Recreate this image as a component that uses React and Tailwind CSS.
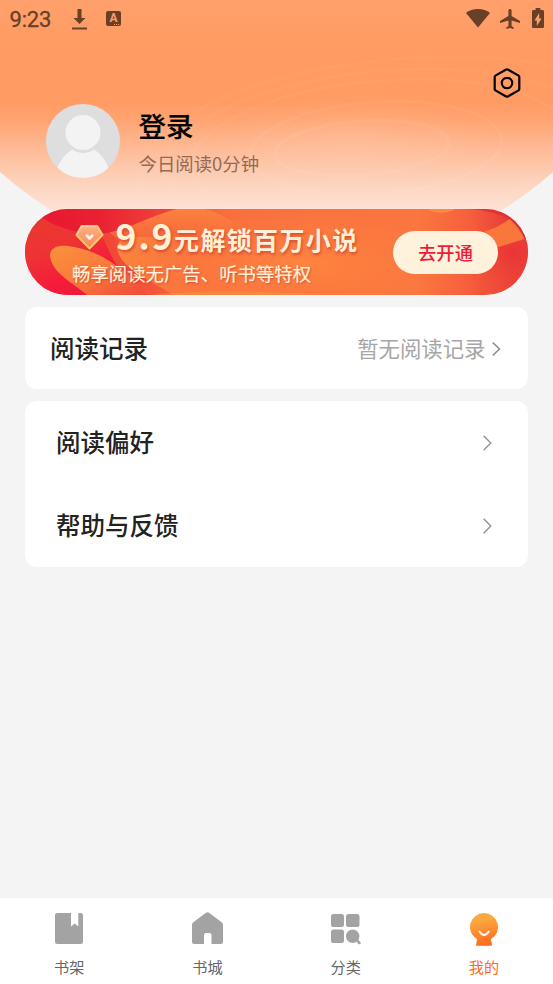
import { useState } from "react";

function StatusBar() {
  return (
    <div className="flex h-[37px] items-center justify-between pl-[9.500px] pr-[9px] text-[#693f28]">
      <div className="flex items-center">
        <span className="w-[62.500px] pt-[2px] font-['Roboto',sans-serif] text-[22px] leading-[38px] font-normal tracking-[-0.200px] [-webkit-text-stroke:0.300px_#693f28]">9:23</span>
        <svg className="mt-px h-[21px] w-[15px]" viewBox="0 0 15 21" fill="currentColor">
          <path d="M5.500 0h4v9h4L7.500 15l-6-6h4zM0 18.500h15v2H0z" />
        </svg>
        <span className="relative ml-[19px] flex h-[15px] w-[15px] items-center justify-center rounded-[2px] bg-[#693f28] pb-px font-['Roboto',sans-serif] text-[12px] font-bold text-[#ff9c65]">
          A
          <svg className="absolute right-px bottom-px h-[1px] w-[6px]" viewBox="0 0 6 1" fill="#ff9c65">
            <path d="M0 0h1v1H0zM2 0h1v1H2zM4 0h1v1H4z" />
          </svg>
        </span>
      </div>
      <div className="flex items-center">
        <svg className="mb-px h-[19px] w-[24px]" viewBox="0 0 24 19" fill="currentColor">
          <path d="M12 0C7.300 0 3.100 1.500 0 4L12 18.500 24 4C20.900 1.500 16.700 0 12 0z" />
        </svg>
        <svg className="ml-[10px] h-[20px] w-[20px]" viewBox="2 2 19 20" preserveAspectRatio="none" fill="currentColor">
          <path d="M21 16v-2l-8-5V3.500c0-.83-.67-1.500-1.500-1.500S10 2.670 10 3.500V9l-8 5v2l8-2.500V19l-2 1.500V22l3.500-1 3.500 1v-1.500L13 19v-5.500l8 2.500z" />
        </svg>
        <svg className="mb-px ml-[12px] h-[20px] w-[12px]" viewBox="7 2 10 20" preserveAspectRatio="none" fill="currentColor">
          <path d="M15.670 4H14V2h-4v2H8.330C7.600 4 7 4.600 7 5.330v15.330C7 21.400 7.600 22 8.330 22h7.330c.74 0 1.340-.6 1.340-1.330V5.330C17 4.600 16.400 4 15.670 4zM11 20v-5.500H9L13 7v5.500h2L11 20z" />
        </svg>
      </div>
    </div>
  );
}

function HeaderArt() {
  return (
    <svg className="absolute inset-x-0 top-0 h-[277px] w-full" viewBox="0 0 553 277">
      <defs>
        <linearGradient id="sky" gradientUnits="userSpaceOnUse" x1="0" y1="0" x2="0" y2="215">
          <stop offset="0" stopColor="#ffa06c" />
          <stop offset="0.2" stopColor="#ff9b63" />
          <stop offset="0.48" stopColor="#ff9c64" />
          <stop offset="0.56" stopColor="#ffa472" />
          <stop offset="0.7" stopColor="#febc98" />
          <stop offset="0.85" stopColor="#fdd3bd" />
          <stop offset="1" stopColor="#fde5da" />
        </linearGradient>
        <clipPath id="dome">
          <path d="M0 0H553V172A419 419 0 0 1 0 172z" />
        </clipPath>
        <radialGradient id="glow">
          <stop offset="0" stopColor="#fff" stopOpacity="0.1" />
          <stop offset="1" stopColor="#fff" stopOpacity="0" />
        </radialGradient>
      </defs>
      <g clipPath="url(#dome)">
        <rect width="553" height="277" fill="url(#sky)" />
        <ellipse cx="350" cy="135" rx="140" ry="40" fill="url(#glow)" />
        <g fill="none" stroke="#fff" strokeWidth="3">
          <ellipse cx="362" cy="148" rx="87" ry="27" strokeOpacity="0.06" transform="rotate(-4 362 148)" />
          <ellipse cx="376" cy="148" rx="126" ry="46" strokeOpacity="0.05" transform="rotate(-4 376 148)" />
          <ellipse cx="380" cy="151" rx="190" ry="70" strokeOpacity="0.04" transform="rotate(-5 380 151)" />
          <ellipse cx="385" cy="153" rx="220" ry="82" strokeOpacity="0.03" transform="rotate(-5 385 153)" />
          <ellipse cx="400" cy="155" rx="260" ry="96" strokeOpacity="0.03" transform="rotate(-5 400 155)" />
        </g>
      </g>
    </svg>
  );
}

function Avatar() {
  return (
    <svg className="h-[74px] w-[74px] shrink-0" viewBox="0 0 74 74">
      <defs>
        <clipPath id="face">
          <circle cx="37" cy="37" r="37" />
        </clipPath>
      </defs>
      <g clipPath="url(#face)">
        <rect width="74" height="74" fill="#dedede" />
        <path d="M9 74C11 60 18 50 26.500 45.500C32 50 42 50 48 45.500C56 50 63 60 65 74z" fill="#f3f3f3" />
        <circle cx="37" cy="29" r="19.500" fill="#dedede" />
        <circle cx="37" cy="28.500" r="17.500" fill="#f3f3f3" />
      </g>
    </svg>
  );
}

function BannerArt() {
  return (
    <svg className="absolute inset-0 h-full w-full" viewBox="0 0 504 86" preserveAspectRatio="none">
      <defs>
        <linearGradient id="base">
          <stop offset="0" stopColor="#ef3034" />
          <stop offset="0.12" stopColor="#ee3f36" />
          <stop offset="0.25" stopColor="#f5553a" />
          <stop offset="0.42" stopColor="#f9703e" />
          <stop offset="0.78" stopColor="#fb763f" />
          <stop offset="0.88" stopColor="#f7603d" />
          <stop offset="1" stopColor="#de2c33" />
        </linearGradient>
        <linearGradient id="patch">
          <stop offset="0" stopColor="#e8162f" />
          <stop offset="0.45" stopColor="#e92133" />
          <stop offset="1" stopColor="#f2483a" />
        </linearGradient>
        <linearGradient id="ember" x1="0" y1="0" x2="0.5" y2="1">
          <stop offset="0" stopColor="#e8382e" />
          <stop offset="0.45" stopColor="#ee3434" />
          <stop offset="0.8" stopColor="#f51c3a" />
          <stop offset="1" stopColor="#f0183a" />
        </linearGradient>
        <linearGradient id="leaf" x1="0" y1="0" x2="1" y2="1">
          <stop offset="0" stopColor="#fb923c" />
          <stop offset="0.5" stopColor="#f9793c" />
          <stop offset="1" stopColor="#f04a36" />
        </linearGradient>
        <linearGradient id="hill" x1="0" y1="0" x2="0" y2="1">
          <stop offset="0" stopColor="#fa823e" />
          <stop offset="0.5" stopColor="#f96c3c" stopOpacity="0.8" />
          <stop offset="1" stopColor="#f65c3b" stopOpacity="0" />
        </linearGradient>
        <linearGradient id="dune">
          <stop offset="0" stopColor="#fb853d" />
          <stop offset="0.4" stopColor="#fb7b3e" stopOpacity="0.8" />
          <stop offset="1" stopColor="#fb773f" stopOpacity="0" />
        </linearGradient>
        <radialGradient id="warm">
          <stop offset="0" stopColor="#ff8c40" stopOpacity="0.7" />
          <stop offset="1" stopColor="#ff833f" stopOpacity="0" />
        </radialGradient>
        <radialGradient id="edge" cx="0.85" cy="0.5" r="0.75">
          <stop offset="0" stopColor="#e93437" />
          <stop offset="1" stopColor="#f9663d" stopOpacity="0" />
        </radialGradient>
      </defs>
      <rect width="504" height="86" fill="url(#base)" />
      <path d="M0 0H18V9C34 21 50 25 76 25C84 40 90 60 114 86H0z" fill="url(#ember)" />
      <path d="M10 0H152C126 7 108 18 85 23.500C56 27 34 20 18 9z" fill="url(#patch)" />
      <path d="M85 23.500C108 18 126 7 152 0H180C199 5 210 13 219 25V60H120C100 45 95 30 85 23.500z" fill="url(#hill)" />
      <path d="M25 47C25 37 36 35 49 38C77 43 100 60 122 86H62C47 73 27 64 25 47z" fill="url(#leaf)" />
      <path d="M92 38C93 31 99 29 109 28H260V86H148C128 72 94 60 92 38z" fill="url(#dune)" />
      <ellipse cx="280" cy="55" rx="150" ry="55" fill="url(#warm)" />
      <path d="M126 86C164 81.500 232 81 300 86z" fill="#fd913f" opacity="0.6" />
      <path d="M403 0C409 5 423 5 431 0z" fill="#fb8b40" />
      <path d="M402 86C430 60 460 44 474 38L500 29L504 0V86z" fill="url(#edge)" />
      <path d="M440 0H504V30L500 30C497 23 492 16 485 10C470 3 455 0 440 0z" fill="#e22a35" opacity="0.8" />
      <path d="M455 24C470 20 478 15 485 10C492 16 497 23 500 30L474 38L462 42z" fill="#f9763c" />
    </svg>
  );
}

function VipBanner() {
  return (
    <div className="relative ml-[24.500px] flex h-[86px] w-[503.500px] overflow-hidden rounded-full">
      <BannerArt />
      <div className="relative flex-1 font-['Noto_Sans_CJK_SC',sans-serif] text-[#fff0d7]">
        <div className="-mt-[2px] flex h-[54.500px] items-baseline pl-[50px] [text-shadow:1px_2px_3px_#c6352bb0]">
          <svg className="mr-[12px] h-[25px] w-[29px]" viewBox="0 0 29 25">
            <defs>
              <linearGradient id="gem" x1="0" y1="0" x2="0" y2="1">
                <stop offset="0" stopColor="#fdb084" />
                <stop offset="1" stopColor="#fb8355" />
              </linearGradient>
            </defs>
            <path d="M6.500 1.200h16L27.500 10 14.500 23.500 1.500 10z" fill="url(#gem)" stroke="#fcc56c" strokeWidth="2" strokeLinejoin="round" />
            <path d="M1.500 10L6.500 1.200h16" fill="none" stroke="#fdcba0" strokeWidth="1.500" />
            <path d="M11.700 10.500l2.800 3 2.800-3" fill="none" stroke="#fff1df" strokeWidth="2.600" strokeLinecap="round" strokeLinejoin="round" />
          </svg>
          <span className="text-[35.500px] leading-[56px] font-bold tracking-[1.700px]">9.9</span>
          <span className="text-[25px] font-bold tracking-[1.350px] whitespace-nowrap">元解锁百万小说</span>
        </div>
        <p className="pl-[47.500px] text-[18.400px] leading-[22px] whitespace-nowrap [text-shadow:1px_1px_2px_#c6352baa] [-webkit-text-stroke:0.200px_#fff0d7]">畅享阅读无广告、听书等特权</p>
      </div>
      <button className="relative mt-[21.500px] mr-[30px] h-[43px] w-[105px] rounded-full bg-[#fff2dc] pt-px font-['Noto_Sans_CJK_SC',sans-serif] text-[18.300px] font-medium text-[#ed1c36]">
        去开通
      </button>
    </div>
  );
}

function Chevron() {
  return (
    <svg className="h-[16px] w-[9px]" viewBox="0 0 9 16" fill="none" stroke="#8f8f8f" strokeWidth="1.300">
      <path d="M.6 .8l7.200 7.200-7.200 7.200" />
    </svg>
  );
}

function MenuRow({ title }) {
  return (
    <div className="flex h-[83px] items-center justify-between pr-[36px] pl-[31px]">
      <span className="text-[24.500px] font-medium text-[#222]">{title}</span>
      <Chevron />
    </div>
  );
}

const tabs = [
  {
    name: "书架",
    icon: (
      <path fill="#a3a3a3" d="M6.500 2H20V15.500L23.700 12.500 27.300 15.500V2H29.500Q32 2 32 4.500V30.500Q32 33 29.500 33H6.500Q4 33 4 30.500V4.500Q4 2 6.500 2z" />
    ),
  },
  {
    name: "书城",
    icon: (
      <path fill="#a3a3a3" d="M17 1.700Q18.500 .8 20 1.700L33 11.500Q34 12.300 34 14V31Q34 33 32 33H22.500V24Q22.500 22 20.500 22H17Q15 22 15 24V33H5Q3 33 3 31V14Q3 12.300 4 11.500z" />
    ),
  },
  {
    name: "分类",
    icon: (
      <g fill="#a3a3a3">
        <rect x="4" y="3" width="13" height="13" rx="2.500" />
        <rect x="19" y="3" width="13.500" height="13" rx="2.500" />
        <rect x="4" y="18.500" width="13" height="13.500" rx="2.500" />
        <circle cx="25.700" cy="25.200" r="6.700" />
        <path d="M29.500 29l3 3" stroke="#a3a3a3" strokeWidth="2.500" strokeLinecap="round" />
      </g>
    ),
  },
  {
    name: "我的",
    icon: (
      <g>
        <defs>
          <linearGradient id="me" x1="0.4" y1="0" x2="0.6" y2="1">
            <stop offset="0.2" stopColor="#fca840" />
            <stop offset="1" stopColor="#ff681b" />
          </linearGradient>
        </defs>
        <path fill="url(#me)" d="M19 2A14 14 0 0 0 12.200 28.300L11 33.300Q10.800 34.800 12.500 34.800H25.500Q27.200 34.800 27 33.300L25.800 28.300A14 14 0 0 0 19 2z" />
        <path d="M14.500 20.500q4.500 7 9.300 0" fill="none" stroke="#fff" strokeWidth="2" strokeLinecap="round" />
      </g>
    ),
  },
];

export default function App() {
  const [active, setActive] = useState(3);

  return (
    <div className="relative flex h-[984px] w-[553px] flex-col overflow-hidden bg-[#f4f4f4] font-['Noto_Sans_CJK_SC',sans-serif]">
      <HeaderArt />
      <header className="relative h-[209px]">
        <StatusBar />
        <div className="flex h-[67px] justify-end pt-[31px] pr-[32px]">
          <svg className="h-[30px] w-[28px]" viewBox="0 0 28 30" fill="none" stroke="#000" strokeWidth="2.200" strokeLinejoin="round">
            <path d="M12.700 1.800Q14 1.100 15.300 1.800L25.600 7.600Q26.300 8 26.300 9V21Q26.300 22 25.600 22.400L15.300 28.200Q14 28.900 12.700 28.200L2.400 22.400Q1.700 22 1.700 21V9Q1.700 8 2.400 7.600z" />
            <circle cx="14" cy="15" r="5.200" />
          </svg>
        </div>
        <div className="flex pl-[46px]">
          <Avatar />
          <div className="-mt-px pl-[18.500px]">
            <h1 className="text-[27.500px] leading-[44px] font-medium text-black [-webkit-text-stroke:0.200px_#000]">登录</h1>
            <p className="text-[18.400px] leading-[32px] text-[#936a57]">今日阅读0分钟</p>
          </div>
        </div>
      </header>

      <main className="flex-1">
        <VipBanner />
        <section className="mx-[25px] mt-[12px] flex h-[82px] items-center justify-between rounded-[12px] bg-white pr-[27.500px] pl-[25px]">
          <span className="text-[24.500px] font-medium text-[#222]">阅读记录</span>
          <div className="flex items-center gap-[6px]">
            <span className="text-[21.400px] text-[#a6a6a6]">暂无阅读记录</span>
            <svg className="mt-[2px] h-[14px] w-[9px]" viewBox="0 0 9 14" fill="none" stroke="#8f8f8f" strokeWidth="1.500">
              <path d="M.8 .6L7.500 7 .8 13.400" />
            </svg>
          </div>
        </section>
        <section className="mx-[25px] mt-[12px] h-[166px] rounded-[12px] bg-white">
          <MenuRow title="阅读偏好" />
          <MenuRow title="帮助与反馈" />
        </section>
      </main>

      <nav className="grid h-[86px] grid-cols-4 bg-white">
        {tabs.map((tab, i) => (
          <button key={tab.name} onClick={() => setActive(i)} className="flex flex-col items-center pt-[13px]">
            <svg className="h-[37px] w-[37px]" viewBox="0 0 37 37">
              {tab.icon}
            </svg>
            <span className={active === i ? "mt-[7px] text-[15.200px] leading-[22px] text-[#ff6b1c]" : "mt-[7px] text-[15.200px] leading-[22px] text-[#666]"}>
              {tab.name}
            </span>
          </button>
        ))}
      </nav>
    </div>
  );
}
